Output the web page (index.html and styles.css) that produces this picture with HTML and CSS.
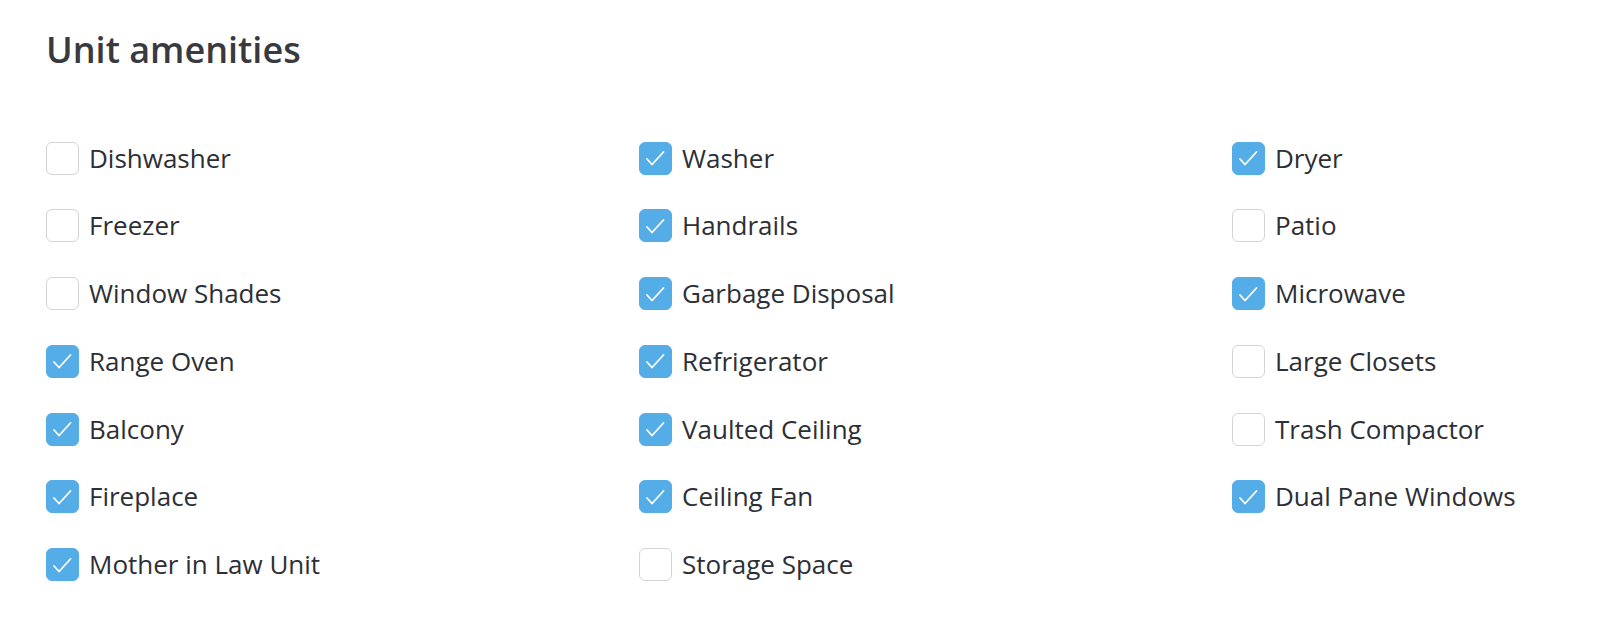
FILE: index.html
```html
<!DOCTYPE html>
<html lang="en">
<head>
    <meta charset="UTF-8">
    <meta name="viewport" content="width=device-width, initial-scale=1.0">
    <title>Unit amenities</title>
    <link rel="stylesheet" href="styles.css">
</head>
<body>
    <div class="amenidades">
        <h2 class="titulo">Unit amenities</h2>
        <div class="lista">
            <label class="item"><span class="caja"></span>Dishwasher</label>
            <label class="item"><span class="caja marcada"><svg viewBox="0 0 33 33"><polyline points="8,18 13,23.5 24.5,11"/></svg></span>Washer</label>
            <label class="item"><span class="caja marcada"><svg viewBox="0 0 33 33"><polyline points="8,18 13,23.5 24.5,11"/></svg></span>Dryer</label>

            <label class="item"><span class="caja"></span>Freezer</label>
            <label class="item"><span class="caja marcada"><svg viewBox="0 0 33 33"><polyline points="8,18 13,23.5 24.5,11"/></svg></span>Handrails</label>
            <label class="item"><span class="caja"></span>Patio</label>

            <label class="item"><span class="caja"></span>Window Shades</label>
            <label class="item"><span class="caja marcada"><svg viewBox="0 0 33 33"><polyline points="8,18 13,23.5 24.5,11"/></svg></span>Garbage Disposal</label>
            <label class="item"><span class="caja marcada"><svg viewBox="0 0 33 33"><polyline points="8,18 13,23.5 24.5,11"/></svg></span>Microwave</label>

            <label class="item"><span class="caja marcada"><svg viewBox="0 0 33 33"><polyline points="8,18 13,23.5 24.5,11"/></svg></span>Range Oven</label>
            <label class="item"><span class="caja marcada"><svg viewBox="0 0 33 33"><polyline points="8,18 13,23.5 24.5,11"/></svg></span>Refrigerator</label>
            <label class="item"><span class="caja"></span>Large Closets</label>

            <label class="item"><span class="caja marcada"><svg viewBox="0 0 33 33"><polyline points="8,18 13,23.5 24.5,11"/></svg></span>Balcony</label>
            <label class="item"><span class="caja marcada"><svg viewBox="0 0 33 33"><polyline points="8,18 13,23.5 24.5,11"/></svg></span>Vaulted Ceiling</label>
            <label class="item"><span class="caja"></span>Trash Compactor</label>

            <label class="item"><span class="caja marcada"><svg viewBox="0 0 33 33"><polyline points="8,18 13,23.5 24.5,11"/></svg></span>Fireplace</label>
            <label class="item"><span class="caja marcada"><svg viewBox="0 0 33 33"><polyline points="8,18 13,23.5 24.5,11"/></svg></span>Ceiling Fan</label>
            <label class="item"><span class="caja marcada"><svg viewBox="0 0 33 33"><polyline points="8,18 13,23.5 24.5,11"/></svg></span>Dual Pane Windows</label>

            <label class="item"><span class="caja marcada"><svg viewBox="0 0 33 33"><polyline points="8,18 13,23.5 24.5,11"/></svg></span>Mother in Law Unit</label>
            <label class="item"><span class="caja"></span>Storage Space</label>
        </div>
    </div>
</body>
</html>
```

FILE: styles.css
```css
body {
    margin: 0;
    font-family: "Open Sans", Arial, sans-serif;
    background-color: #ffffff;
    color: #2d2f36;
    overflow: hidden;
}
.amenidades {
    padding: 30px 0 0 46px;
}
.titulo {
    margin: 0;
    font-size: 36px;
    line-height: 40px;
    font-weight: 600;
    color: #393a40;
}
.lista {
    display: grid;
    grid-template-columns: 593px 593px 1fr;
    row-gap: 34.75px;
    margin-top: 71.5px;
}
.item {
    display: flex;
    align-items: center;
    height: 33px;
    font-size: 26px;
    line-height: 33px;
    gap: 10px;
}
.caja {
    box-sizing: border-box;
    width: 33px;
    height: 33px;
    border: 1.5px solid #d4d4d6;
    border-radius: 6px;
    background-color: #ffffff;
    flex-shrink: 0;
}
.caja.marcada {
    background-color: #55ade8;
    border-color: #55ade8;
}
.caja svg {
    display: block;
    width: 33px;
    height: 33px;
    margin: -1.5px;
}
.caja polyline {
    fill: none;
    stroke: #ffffff;
    stroke-width: 1.8;
    stroke-linecap: round;
    stroke-linejoin: round;
}
```
